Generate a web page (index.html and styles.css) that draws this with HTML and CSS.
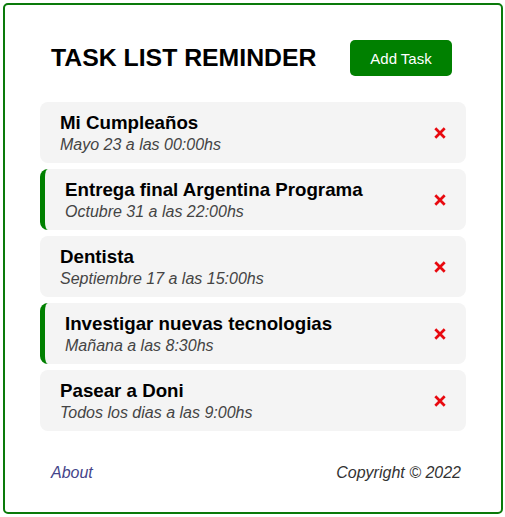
FILE: index.html
```html
<!DOCTYPE html>
<html>
<head>
<meta charset="utf-8">
<link rel="stylesheet" href="styles.css">
</head>
<body>
<div class="container">
  <header class="header">
    <h1 class="title">TASK LIST REMINDER</h1>
    <button class="btn">Add Task</button>
  </header>
  <div class="tasks">
    <div class="task">
      <div class="task-text">
        <h3 class="task-title">Mi Cumpleaños</h3>
        <p class="task-day">Mayo 23 a las 00:00hs</p>
      </div>
      <svg class="del" width="12" height="12" viewBox="0 0 12 12"><path d="M1.3 1.3L10.7 10.7M10.7 1.3L1.3 10.7"/></svg>
    </div>
    <div class="task reminder">
      <div class="task-text">
        <h3 class="task-title">Entrega final Argentina Programa</h3>
        <p class="task-day">Octubre 31 a las 22:00hs</p>
      </div>
      <svg class="del" width="12" height="12" viewBox="0 0 12 12"><path d="M1.3 1.3L10.7 10.7M10.7 1.3L1.3 10.7"/></svg>
    </div>
    <div class="task">
      <div class="task-text">
        <h3 class="task-title">Dentista</h3>
        <p class="task-day">Septiembre 17 a las 15:00hs</p>
      </div>
      <svg class="del" width="12" height="12" viewBox="0 0 12 12"><path d="M1.3 1.3L10.7 10.7M10.7 1.3L1.3 10.7"/></svg>
    </div>
    <div class="task reminder">
      <div class="task-text">
        <h3 class="task-title">Investigar nuevas tecnologias</h3>
        <p class="task-day">Mañana a las 8:30hs</p>
      </div>
      <svg class="del" width="12" height="12" viewBox="0 0 12 12"><path d="M1.3 1.3L10.7 10.7M10.7 1.3L1.3 10.7"/></svg>
    </div>
    <div class="task">
      <div class="task-text">
        <h3 class="task-title">Pasear a Doni</h3>
        <p class="task-day">Todos los dias a las 9:00hs</p>
      </div>
      <svg class="del" width="12" height="12" viewBox="0 0 12 12"><path d="M1.3 1.3L10.7 10.7M10.7 1.3L1.3 10.7"/></svg>
    </div>
  </div>
  <footer class="footer">
    <a class="about">About</a>
    <p class="copy">Copyright © 2022</p>
  </footer>
</div>
</body>
</html>
```
FILE: styles.css
```css
* { box-sizing: border-box; }
html, body { margin: 0; padding: 0; background: #fff; }
body { font-family: "Liberation Sans", Arial, sans-serif; padding: 3px; }
.container {
  width: 500px;
  height: 511px;
  border: 2px solid #0a7a0a;
  border-radius: 5px;
  padding: 35px 35px 0 35px;
}
.header {
  display: flex;
  justify-content: space-between;
  align-items: center;
  padding: 0 14px 0 11px;
  height: 36px;
  margin-bottom: 26px;
}
.title {
  margin: 0;
  font-size: 24.8px;
  font-weight: bold;
  color: #000;
  line-height: 28px;
}
.btn {
  width: 102px;
  height: 36px;
  background: #008000;
  color: #fff;
  border: none;
  border-radius: 5px;
  font-family: "Liberation Sans", Arial, sans-serif;
  font-size: 15px;
  padding: 0;
}
.tasks { display: flex; flex-direction: column; gap: 6px; }
.task {
  background: #f4f4f4;
  border-radius: 8px;
  padding: 11px 20px 9px 20px;
  display: flex;
  justify-content: space-between;
  align-items: center;
  height: 61px;
}
.del { margin-top: -2px; }
.task.reminder { border-left: 5px solid #008000; }
.task-title {
  margin: 0 0 3px 0;
  font-size: 18.72px;
  font-weight: bold;
  line-height: 20px;
  color: #000;
}
.task-day {
  margin: 0;
  font-size: 16px;
  font-style: italic;
  line-height: 18px;
  color: #444;
}
.del { stroke: #e8090f; stroke-width: 2.7; fill: none; flex: none; }
.footer {
  display: flex;
  justify-content: space-between;
  align-items: baseline;
  padding: 0 5px 0 11px;
  margin-top: 33px;
  font-size: 16px;
  font-style: italic;
  line-height: 18px;
}
.about { color: #45458a; }
.copy { margin: 0; color: #333; }
```
